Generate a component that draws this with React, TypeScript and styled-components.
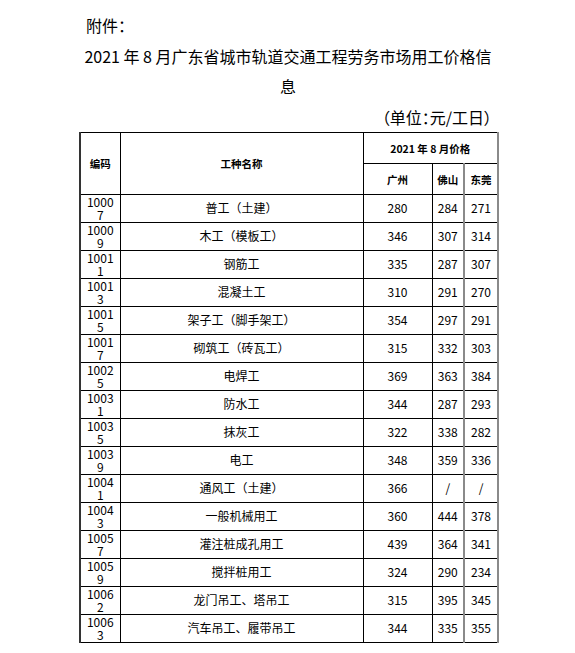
import styled, { createGlobalStyle, css } from "styled-components"

const GlobalStyle = createGlobalStyle`
    html, body {
        margin: 0;
        padding: 0;
        background: #fff;
        color: #000;
        font-family: "Noto Sans CJK SC", "Noto Sans", sans-serif;
    }
`

interface RowValues {
    code: string
    name: string
    gz: string
    fs: string
    dg: string
}

const rows: RowValues[] = [
    { code: "10007", name: "普工（土建）", gz: "280", fs: "284", dg: "271" },
    { code: "10009", name: "木工（模板工）", gz: "346", fs: "307", dg: "314" },
    { code: "10011", name: "钢筋工", gz: "335", fs: "287", dg: "307" },
    { code: "10013", name: "混凝土工", gz: "310", fs: "291", dg: "270" },
    { code: "10015", name: "架子工（脚手架工）", gz: "354", fs: "297", dg: "291" },
    { code: "10017", name: "砌筑工（砖瓦工）", gz: "315", fs: "332", dg: "303" },
    { code: "10025", name: "电焊工", gz: "369", fs: "363", dg: "384" },
    { code: "10031", name: "防水工", gz: "344", fs: "287", dg: "293" },
    { code: "10035", name: "抹灰工", gz: "322", fs: "338", dg: "282" },
    { code: "10039", name: "电工", gz: "348", fs: "359", dg: "336" },
    { code: "10041", name: "通风工（土建）", gz: "366", fs: "/", dg: "/" },
    { code: "10043", name: "一般机械用工", gz: "360", fs: "444", dg: "378" },
    { code: "10057", name: "灌注桩成孔用工", gz: "439", fs: "364", dg: "341" },
    { code: "10059", name: "搅拌桩用工", gz: "324", fs: "290", dg: "234" },
    { code: "10062", name: "龙门吊工、塔吊工", gz: "315", fs: "395", dg: "345" },
    { code: "10063", name: "汽车吊工、履带吊工", gz: "344", fs: "335", dg: "355" },
]

export default function App() {
    return (
        <>
            <GlobalStyle />
            <Page>
                <Sheet>
                    <Attach>附件：</Attach>
                    <Title>2021 年 8 月广东省城市轨道交通工程劳务市场用工价格信息</Title>
                    <Unit>（单位：元/工日）</Unit>

                    <PriceTable>
                        <colgroup>
                            <col style={{ width: 40 }} />
                            <col style={{ width: 243 }} />
                            <col style={{ width: 69 }} />
                            <col style={{ width: 32 }} />
                            <col style={{ width: 34 }} />
                        </colgroup>
                        <thead>
                            <tr>
                                <HeadCell rowSpan={2} $first>编码</HeadCell>
                                <HeadCell rowSpan={2}>工种名称</HeadCell>
                                <HeadCell colSpan={3} $soft>2021 年 8 月价格</HeadCell>
                            </tr>
                            <tr>
                                <HeadCell>广州</HeadCell>
                                <HeadCell $soft>佛山</HeadCell>
                                <HeadCell $soft>东莞</HeadCell>
                            </tr>
                        </thead>
                        <tbody>
                            {
                                rows.map(row => (
                                    <tr key={row.code}>
                                        <CodeCell $first>{row.code}</CodeCell>
                                        <NameCell>{row.name}</NameCell>
                                        <NumCell>{row.gz}</NumCell>
                                        <NumCell $soft>{row.fs}</NumCell>
                                        <NumCell $soft>{row.dg}</NumCell>
                                    </tr>
                                ))
                            }
                        </tbody>
                    </PriceTable>
                </Sheet>
            </Page>
        </>
    )
}

const Page = styled.div`
    padding: 10px 0 0 79px;
`

const Sheet = styled.div`
    width: 418px;
`

const Line = styled.div`
    font-size: 16px;
    line-height: 30.5px;
`

const Attach = styled(Line)`
    padding-left: 7px;
    font-feature-settings: "palt";
`

const Title = styled(Line)`
    text-align: center;
`

const Unit = styled(Line)`
    text-align: right;
    padding-right: 5px;
    font-feature-settings: "palt";
`

const PriceTable = styled.table`
    border-collapse: collapse;
    table-layout: fixed;
    width: 418px;
`

interface CellProps {
    $soft?: boolean
    $first?: boolean
}

const cellBorders = css<CellProps>`
    border: 1px solid #000;
    ${p => p.$soft && css`border-right: 2px solid #8a8a8a;`}
    ${p => p.$first && css`border-left: 2px solid #333;`}
`

const HeadCell = styled.th<CellProps>`
    ${cellBorders}
    height: 30px;
    padding: 0;
    font-size: 10.5px;
    font-weight: 700;
    text-align: center;
    vertical-align: middle;
`

const bodyCell = css`
    height: 27px;
    padding: 0;
    font-size: 12px;
    line-height: 12.6px;
    text-align: center;
    vertical-align: middle;
`

const CodeCell = styled.td<CellProps>`
    ${cellBorders}
    ${bodyCell}
    padding: 0 4px;
    word-break: break-all;
`

const NameCell = styled.td<CellProps>`
    ${cellBorders}
    ${bodyCell}
`

const NumCell = styled.td<CellProps>`
    ${cellBorders}
    ${bodyCell}
`
